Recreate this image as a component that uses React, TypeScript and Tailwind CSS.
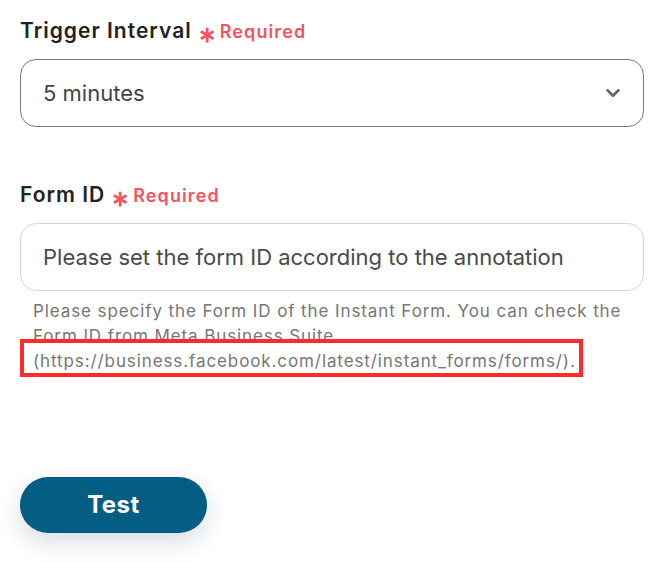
import { ChevronDown } from "lucide-react";

function FieldLabel({ text }: { text: string }) {
    return (
        <div className="flex items-center gap-[6px] h-[26px]">
            <span className="text-[21px] font-semibold text-[#222222] tracking-[1px]">{text}</span>
            <span className="flex items-center gap-[4px] text-[#f5535e] font-semibold">
                <span className="text-[22px] leading-none mt-[6px]">∗</span>
                <span className="text-[18px] tracking-[1.1px]">Required</span>
            </span>
        </div>
    );
}

export default function App() {
    return (
        <div
            className="w-[670px] h-[562px] bg-white px-5 pt-[18px] overflow-hidden"
            style={{ fontFamily: "Inter, 'Noto Sans', sans-serif" }}
        >
            {/* Trigger Interval */}
            <FieldLabel text="Trigger Interval" />
            <div className="mt-[15px] w-[624px] h-[68px] rounded-[16px] border border-[#7a7a7a] flex items-center justify-between pl-[22px] pr-[19px]">
                <span className="text-[22px] text-[#444444]">5 minutes</span>
                <ChevronDown size={22} strokeWidth={2.8} className="text-[#666666]" />
            </div>

            {/* Form ID */}
            <div className="mt-[55px]">
                <FieldLabel text="Form ID" />
            </div>
            <div className="mt-[15px] w-[624px] h-[68px] rounded-[16px] border border-[#d4d4dc] flex items-center pl-[22px]">
                <span className="text-[22px] text-[#4a4a4a]">Please set the form ID according to the annotation</span>
            </div>
            <div className="mt-[8px] pl-[13px] text-[17px] leading-[25px] tracking-[0.9px] text-[#767676]">
                <div>Please specify the Form ID of the Instant Form. You can check the</div>
                <div>Form ID from Meta Business Suite</div>
                <div className="relative">
                    (https://business.facebook.com/latest/instant_forms/forms/).
                    <span className="absolute left-[-13px] top-[-10px] w-[563px] h-[38px] border-[4px] border-[#ff2a2a]" />
                </div>
            </div>

            {/* Test button */}
            <button className="mt-[103px] w-[187px] h-[56px] rounded-full bg-[#045e84] text-white text-[24px] font-bold tracking-[0.5px] shadow-[0_8px_24px_rgba(40,50,90,0.18)]">
                Test
            </button>
        </div>
    );
}
